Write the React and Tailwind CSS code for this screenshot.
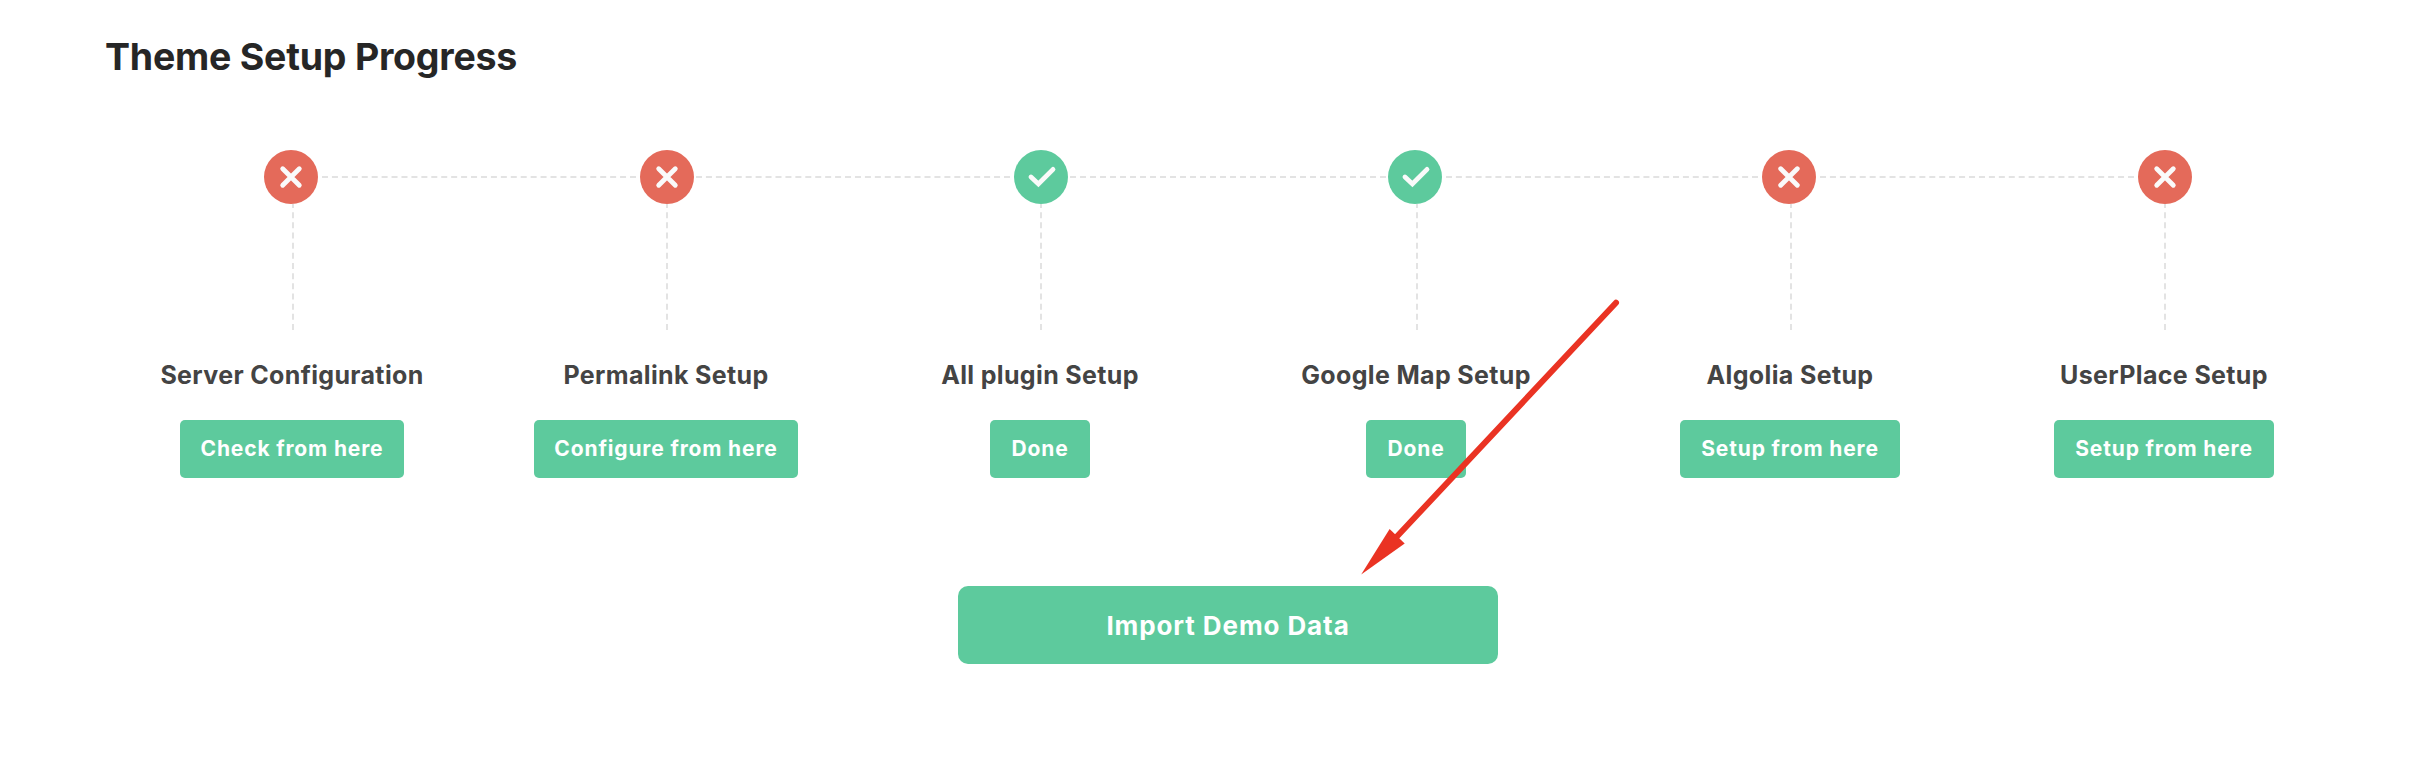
const steps = [
  { title: 'Server Configuration', action: 'Check from here', done: false, col: 'w-[374px]', btn: 'w-56' },
  { title: 'Permalink Setup', action: 'Configure from here', done: false, col: 'w-[374px]', btn: 'w-66' },
  { title: 'All plugin Setup', action: 'Done', done: true, col: 'w-[374px]', btn: 'w-25' },
  { title: 'Google Map Setup', action: 'Done', done: true, col: 'ml-0.5 w-[374px]', btn: 'w-25' },
  { title: 'Algolia Setup', action: 'Setup from here', done: false, col: 'w-[374px]', btn: 'w-55' },
  { title: 'UserPlace Setup', action: 'Setup from here', done: false, col: 'w-[374px]', btn: 'w-55' },
];

const connectors = [
  'ml-1 mr-1 w-[314px]',
  'ml-0.5 mr-1 w-[314px]',
  'ml-0.5 mr-0.5 w-[316px]',
  'ml-1 mr-1 w-[312px]',
  'ml-1 mr-1 w-[314px]',
];

function StatusIcon({ done }) {
  return (
    <span
      className={`size-[54px] shrink-0 rounded-full ${done ? 'bg-[#5dca9d]' : 'bg-[#e46a5a]'}`}
    >
      <svg viewBox="0 0 54 54" className="size-full" fill="none" stroke="#fafafa" strokeWidth="4.8" strokeLinecap="round">
        {done ? <path d="M17 27 24.4 33.9 39 19.4" /> : <path d="M18.7 18.7 35.3 35.3M35.3 18.7 18.7 35.3" />}
      </svg>
    </span>
  );
}

function Timeline() {
  return (
    <div className="flex h-[54px] items-center pl-[159px]">
      {steps.map((step, i) => (
        <div key={step.title} className="flex items-center">
          <StatusIcon done={step.done} />
          {i < connectors.length && (
            <div className={`shrink-0 border-t-2 border-dashed border-[#e3e3e3] ${connectors[i]}`} />
          )}
        </div>
      ))}
    </div>
  );
}

function Step({ step }) {
  return (
    <div className={`flex shrink-0 flex-col items-center ${step.col}`}>
      <div className="pl-0.5">
        <div className="h-[126px] overflow-hidden">
          <div className="-mt-0.5 h-32 border-l-2 border-dashed border-[#e3e3e3]" />
        </div>
      </div>
      <h3 className="mt-[29px] text-[25px] leading-8 font-bold tracking-[0.35px] whitespace-nowrap text-[#444444]">
        {step.title}
      </h3>
      <button
        className={`mt-[29px] h-[58px] rounded-[5px] bg-[#5dca9d] text-[21px] font-bold tracking-[0.85px] whitespace-nowrap text-white ${step.btn}`}
      >
        {step.action}
      </button>
    </div>
  );
}

export default function App() {
  return (
    <main className="relative h-[768px] w-[2422px] overflow-hidden bg-white pt-8 pl-[105px] font-['Inter',sans-serif]">
      <h1 className="h-[50px] text-[37.5px] leading-[50px] font-bold tracking-[-0.23px] text-[#262626]">
        Theme Setup Progress
      </h1>
      <div className="mt-[68px]">
        <Timeline />
        <div className="flex">
          {steps.map((step) => (
            <Step key={step.title} step={step} />
          ))}
        </div>
      </div>
      <div className="mt-27 flex w-[2246px] justify-center">
        <button className="h-[78px] w-[540px] rounded-[10px] bg-[#5dca9d] text-[26px] font-bold tracking-[0.9px] text-white">
          Import Demo Data
        </button>
      </div>
      <svg className="pointer-events-none absolute top-[290px] left-[1350px] h-[290px] w-[280px]" viewBox="1350 290 280 290">
        <path d="M1616 302.8 1396 537.5" stroke="#ea3323" strokeWidth="6" strokeLinecap="round" />
        <path d="M1361.2 574.5 1389.6 529 1404.7 543.6Z" fill="#ea3323" />
      </svg>
    </main>
  );
}
